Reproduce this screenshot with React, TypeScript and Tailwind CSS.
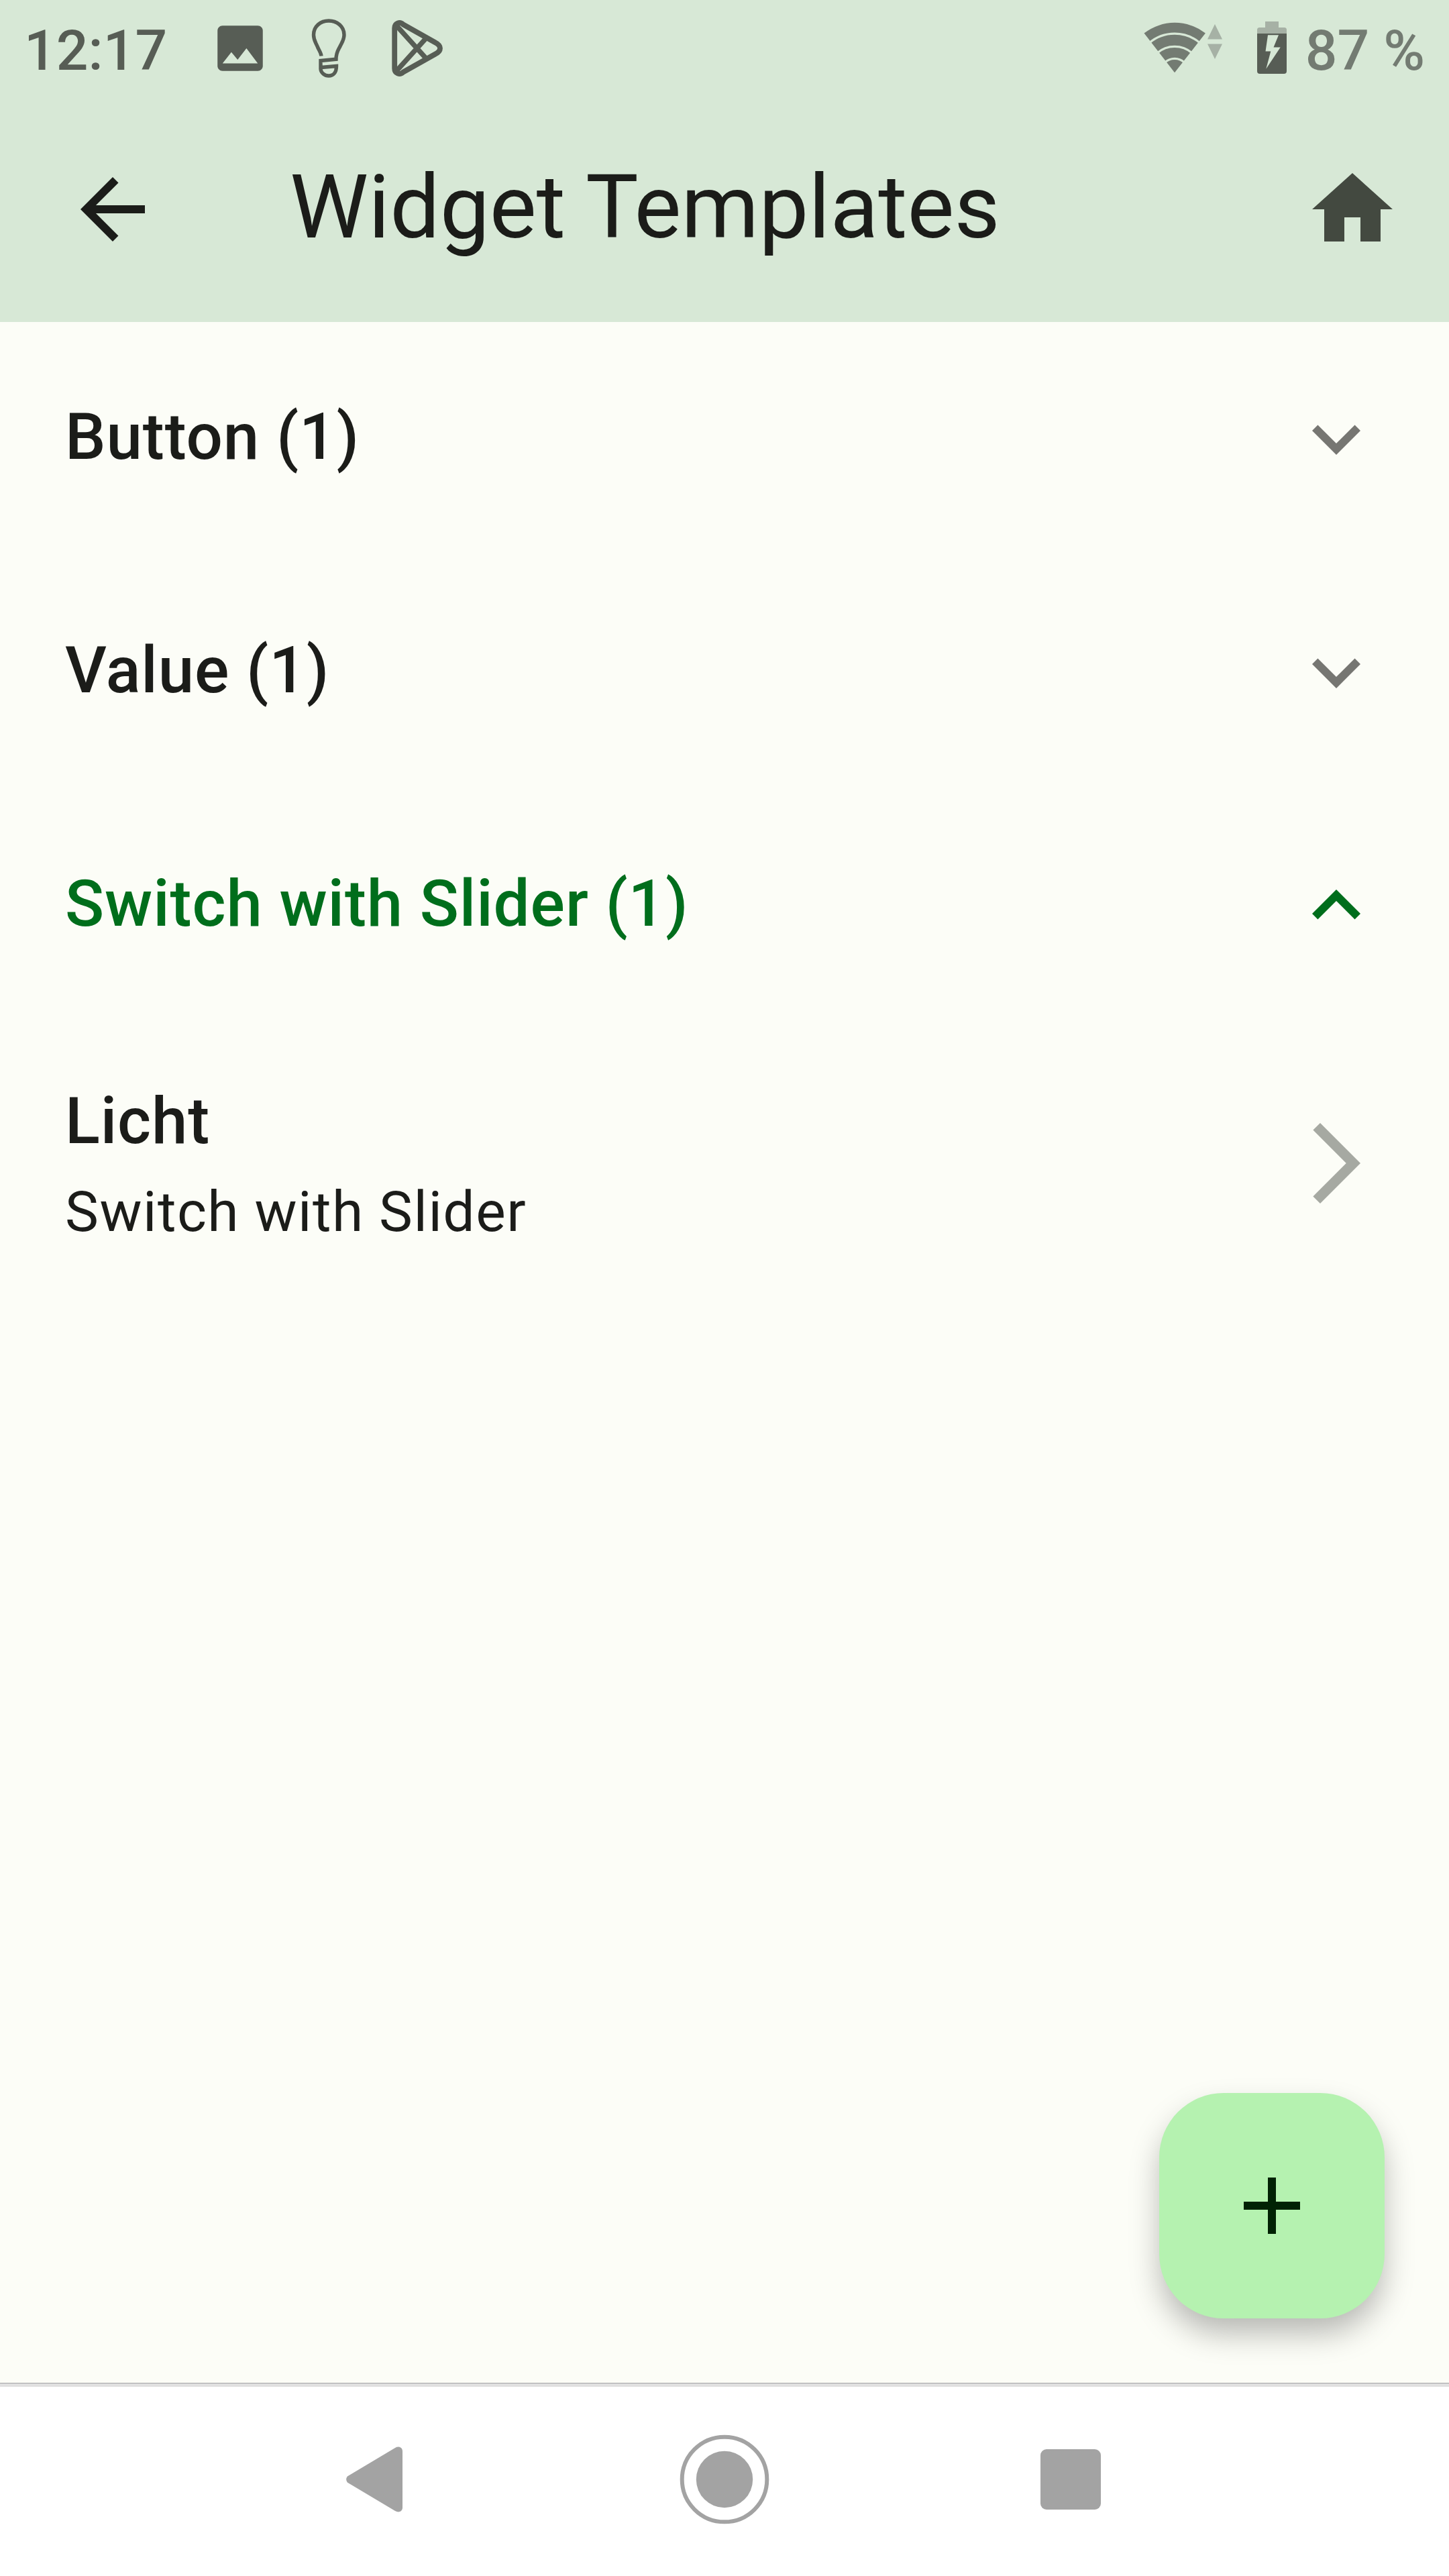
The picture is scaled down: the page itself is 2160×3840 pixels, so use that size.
import type { ReactNode } from "react";

function StatusBar() {
  return (
    <div className="flex h-[144px] items-center justify-between px-[36px]">
      <div className="flex h-full items-center">
        <span className="pt-[8px] text-[84px] leading-none font-medium text-[#575d55]">12:17</span>
        <svg className="ml-[64px] size-[90px]" viewBox="0 0 24 24" fill="#575d55">
          <path d="M21 19V5c0-1.100-.9-2-2-2H5c-1.100 0-2 .9-2 2v14c0 1.100.9 2 2 2h14c1.100 0 2-.9 2-2z" />
          <path d="M5 18l3.500-4.500 2.500 3L14.500 12l4.500 6z" fill="#d7e8d6" />
        </svg>
        <svg className="ml-[42px] h-[144px] w-[90px]" viewBox="445 0 90 144" fill="none" stroke="#575d55" strokeWidth="5.400">
          <path d="M479 83.500C478.500 78 475 74.500 473 69C470.500 63 467.500 60 467.500 52C467.500 39 478 31 490 31C502 31 513 39 513 52C513 59 510 63 507 69C504 75 501 78 501 88.300L478 90.500V103C478.500 108.500 484 113 490 113C497 113 501.500 108 501.500 98.500L479 100.500" />
        </svg>
        <svg className="ml-[42px] h-[144px] w-[90px]" viewBox="577 0 90 144" fill="none" stroke="#575d55" strokeWidth="7.800">
          <path d="M588.200 42C588.200 34.500 596 31.500 601 36.500L649 63.500Q656 67 656 72Q656 77 649 80.500L601 107.500C596 112.500 588.200 109.500 588.200 102Z" />
          <path d="M589 36L636 88M589 108L636 56" strokeWidth="7.400" />
        </svg>
      </div>
      <div className="flex h-full items-center">
        <svg className="h-[144px] w-[120px]" viewBox="1704 0 120 144">
          <path d="M1751 108.300L1705.500 49.500A74.600 74.600 0 0 1 1796.900 49.500Z" fill="#737b72" />
          <g fill="none" stroke="#d7e8d6" strokeWidth="3.200">
            <path d="M1713 64.200A58.500 58.500 0 0 1 1789 64.200" />
            <path d="M1725 79A40 40 0 0 1 1777 79" />
            <path d="M1736 93.500A21.500 21.500 0 0 1 1766 93.500" />
          </g>
          <path d="M1811 36L1822 58.500H1800ZM1811 88L1800 65.500H1822Z" fill="#a6b1a5" />
        </svg>
        <svg className="ml-[50px] h-[144px] w-[44px]" viewBox="1874 0 44 144">
          <path d="M1874 50V44.500Q1874 41 1877.500 41H1886V32H1906V41H1914.500Q1918 41 1918 44.500V50Z" fill="#a6b1a5" />
          <path d="M1874 50H1918V106Q1918 110 1914 110H1878Q1874 110 1874 106Z" fill="#575d55" />
          <path d="M1890 52.300H1906L1898.500 70.500H1908.700L1887.300 102.700L1894.300 76.500H1886.500Z" fill="#d7e8d6" />
        </svg>
        <span className="ml-[28px] pt-[8px] text-[84px] leading-none font-medium text-[#737b72]">87 %</span>
      </div>
    </div>
  );
}

function AppBar() {
  return (
    <div className="flex h-[336px] items-center pr-[72px] pl-[96px]">
      <svg className="size-[144px]" viewBox="0 0 24 24" fill="#1b1c19">
        <path d="M20 11H7.830l5.590-5.590L12 4l-8 8 8 8 1.410-1.410L7.830 13H20v-2z" />
      </svg>
      <h1 className="ml-[192px] flex-1 pb-[6px] text-[132px] leading-none font-normal text-[#1b1c19]">
        Widget Templates
      </h1>
      <svg className="size-[144px]" viewBox="0 0 24 24" fill="#434940">
        <path d="M10 20v-6h4v6h5v-8h3L12 3 2 12h3v8z" />
      </svg>
    </div>
  );
}

function Section({ title, open = false, children }: { title: string; open?: boolean; children?: ReactNode }) {
  return (
    <section>
      <div
        className={
          open
            ? "flex h-[348px] items-center justify-between pr-[96px] pl-[97px] text-[#006e1c]"
            : "flex h-[348px] items-center justify-between pr-[96px] pl-[97px] text-[#1b1c19]"
        }
      >
        <h2 className="pb-[6px] text-[96px] leading-[144px] font-medium tracking-[0.9px]">{title}</h2>
        <svg className="size-[144px]" viewBox="0 0 24 24" fill={open ? "#006e1c" : "#767672"}>
          <path
            d={
              open
                ? "M12 8l-6 6 1.410 1.410L12 10.830l4.590 4.580L18 14z"
                : "M16.590 8.590L12 13.170 7.410 8.590 6 10l6 6 6-6z"
            }
          />
        </svg>
      </div>
      {children}
    </section>
  );
}

function TemplateItem({ name, type }: { name: string; type: string }) {
  return (
    <div className="flex h-[420px] items-center justify-between pr-[96px] pl-[97px] text-[#1b1c19]">
      <div className="flex flex-col gap-1 pb-[2px]">
        <span className="text-[96px] leading-[144px] font-medium tracking-[0.9px]">{name}</span>
        <span className="text-[84px] leading-[120px] tracking-[1.5px]">{type}</span>
      </div>
      <svg className="size-[144px]" viewBox="0 0 24 24" fill="#a6a9a2">
        <path d="M6.230 20.230L8 22l10-10L8 2 6.230 3.770 14.460 12z" />
      </svg>
    </div>
  );
}

function NavBar() {
  return (
    <nav className="h-[288px] bg-[#e0e0e0] pt-[6px] shadow-[inset_0_1px_0_#a3a3a6]">
      <div className="flex h-full items-center bg-white pb-[6px] pl-[498px]">
        <svg className="size-[120px]" viewBox="0 0 120 120" fill="#a3a3a3">
          <path d="M19.800 55.500L91 13C96 10 102 12 102 18V102C102 108 96 110 91 107L19.800 64.500Q16.500 60 19.800 55.500Z" />
        </svg>
        <svg className="ml-[392px] size-[140px]" viewBox="0 0 140 140">
          <circle cx="70" cy="70" r="63.300" fill="none" stroke="#a3a3a3" strokeWidth="6" />
          <circle cx="70" cy="70" r="42.200" fill="#a3a3a3" />
        </svg>
        <div className="ml-[401px] size-[90px] rounded-[9px] bg-[#a3a3a3]" />
      </div>
    </nav>
  );
}

export default function App() {
  return (
    <div className="relative flex h-[3840px] w-[2160px] flex-col overflow-hidden bg-[#fcfdf7] font-['Roboto',sans-serif]">
      <header className="bg-[#d7e8d6]">
        <StatusBar />
        <AppBar />
      </header>
      <main className="flex-1">
        <Section title="Button (1)" />
        <Section title="Value (1)" />
        <Section title="Switch with Slider (1)" open>
          <TemplateItem name="Licht" type="Switch with Slider" />
        </Section>
      </main>
      <NavBar />
      <button
        aria-label="Add"
        className="absolute right-[96px] bottom-[384px] flex size-[336px] items-center justify-center rounded-[96px] bg-[#b5f2b0] shadow-[0_24px_46px_-2px_rgba(0,0,0,0.28)]"
      >
        <svg className="size-[144px]" viewBox="0 0 24 24" fill="#002204">
          <path d="M19 13h-6v6h-2v-6H5v-2h6V5h2v6h6v2z" />
        </svg>
      </button>
    </div>
  );
}
